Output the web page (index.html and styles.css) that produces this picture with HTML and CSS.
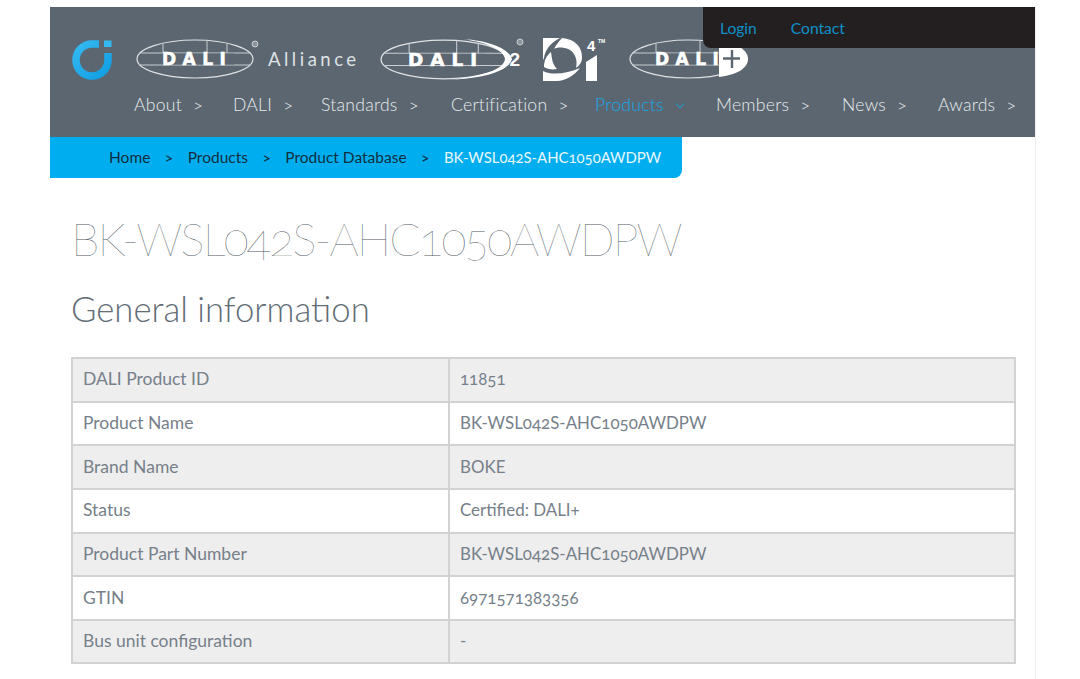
FILE: index.html
```html
<!DOCTYPE html>
<html lang="en">
<head>
    <meta charset="UTF-8">
    <meta name="viewport" content="width=device-width, initial-scale=1.0">
    <title>BK-WSL042S-AHC1050AWDPW</title>
    <link rel="stylesheet" href="styles.css">
</head>
<body>
    <svg class="defs" width="0" height="0">
        <defs>
            <g id="oval-grid">
                <ellipse cx="59" cy="20" rx="58" ry="19" fill="none" stroke="#dfe2e4" stroke-width="1.200"/>
                <path d="M3 14H115M3 26H115M27 4V14M71 2V14M91 4V14" fill="none" stroke="#c9cdd1" stroke-width="1"/>
                <rect x="26" y="14.500" width="72" height="11" fill="#5b6670"/>
            </g>
        </defs>
    </svg>
    <div class="page">
        <header class="site-header">
            <div class="top-links">
                <a href="#">Login</a>
                <a href="#">Contact</a>
            </div>
            <div class="logos">
                <svg class="logo-mark" width="40" height="40" viewBox="0 0 40 40">
                    <defs>
                        <linearGradient id="mark-blue" x1="0" y1="0" x2="1" y2="1">
                            <stop offset="0" stop-color="#35b8f0"/>
                            <stop offset="1" stop-color="#0f9fe4"/>
                        </linearGradient>
                    </defs>
                    <path d="M27 4H20A16 16 0 1 0 36 20V13" fill="none" stroke="url(#mark-blue)" stroke-width="7.500"/>
                    <rect x="32" y="0.500" width="7.500" height="6.500" fill="#35b8f0"/>
                </svg>
                <svg class="logo-dali" width="124" height="40" viewBox="0 0 124 40">
                    <use href="#oval-grid"/>
                    <text class="dali-word" x="26" y="26">DALI</text>
                    <circle cx="119" cy="5" r="3" fill="#8b949b" stroke="#c9cdd1"/>
                </svg>
                <span class="logo-alliance">Alliance</span>
                <svg class="logo-dali2" width="146" height="42" viewBox="0 0 146 42">
                    <g transform="translate(1 1) scale(1.080 1.020)">
                        <use href="#oval-grid"/>
                        <text class="dali-word" x="26" y="26">DALI</text>
                    </g>
                    <path d="M84 1C112 3 130 11 133 21C130 32 110 40 70 42C106 38 125 31 126 21C125 12 110 5 84 1Z" fill="#fff"/>
                    <text class="dali-two" x="130.500" y="28">2</text>
                    <circle cx="141" cy="4" r="3" fill="#8b949b" stroke="#c9cdd1"/>
                </svg>
                <svg class="logo-d4i" width="66" height="44" viewBox="0 0 66 44">
                    <path d="M0 0H17C8 4 2 12 1 20L0 22Z" fill="#fff"/>
                    <path d="M19 0C32 1 39 9 39 19C39 24 37 27 33 30C35 22 32 14 25 11C20 9 14 9 11 11C13 7 16 3 19 0Z" fill="#fff"/>
                    <path d="M8 14C9 20 9 26 14 31C9 32 4 31 1 29C1 22 4 17 8 14Z" fill="#fff"/>
                    <path d="M0 33C10 38 25 35 37 30C32 37 22 43 14 43H0Z" fill="#fff"/>
                    <path d="M43 24L54 17V43H43Z" fill="#fff"/>
                    <text class="d4i-four" x="44" y="13">4</text>
                    <text class="d4i-tm" x="55" y="5">TM</text>
                </svg>
                <svg class="logo-daliplus" width="120" height="40" viewBox="0 0 120 40">
                    <use href="#oval-grid"/>
                    <text class="dali-word" x="26" y="26">DALI</text>
                    <path d="M90 2C108 4 119 11 119 20C119 29 108 36 90 38Z" fill="#fff"/>
                    <path d="M103 11V29M94 19.500H111" fill="none" stroke="#5b6670" stroke-width="2.400"/>
                </svg>
            </div>
            <nav class="main-nav">
                <a class="nav-about" href="#">About <span class="caret">&gt;</span></a>
                <a class="nav-dali" href="#">DALI <span class="caret">&gt;</span></a>
                <a class="nav-standards" href="#">Standards <span class="caret">&gt;</span></a>
                <a class="nav-cert" href="#">Certification <span class="caret">&gt;</span></a>
                <a class="nav-products active" href="#">Products
                    <svg class="chevron" width="10" height="6" viewBox="0 0 10 6"><path d="M1 0.500L5 5L9 0.500" fill="none" stroke="#17a8ea"/></svg>
                </a>
                <a class="nav-members" href="#">Members <span class="caret">&gt;</span></a>
                <a class="nav-news" href="#">News <span class="caret">&gt;</span></a>
                <a class="nav-awards" href="#">Awards <span class="caret">&gt;</span></a>
            </nav>
        </header>

        <div class="breadcrumb">
            <a href="#">Home</a><span class="sep">&gt;</span>
            <a href="#">Products</a><span class="sep">&gt;</span>
            <a href="#">Product Database</a><span class="sep">&gt;</span>
            <span class="current">BK-WSL042S-AHC1050AWDPW</span>
        </div>

        <main class="content">
            <h1>BK-WSL042S-AHC1050AWDPW</h1>
            <h2>General information</h2>
            <table class="info-table">
                <tr><td>DALI Product ID</td><td>11851</td></tr>
                <tr><td>Product Name</td><td>BK-WSL042S-AHC1050AWDPW</td></tr>
                <tr><td>Brand Name</td><td>BOKE</td></tr>
                <tr><td>Status</td><td>Certified: DALI+</td></tr>
                <tr><td>Product Part Number</td><td>BK-WSL042S-AHC1050AWDPW</td></tr>
                <tr><td>GTIN</td><td>6971571383356</td></tr>
                <tr><td>Bus unit configuration</td><td>-</td></tr>
            </table>
        </main>
    </div>
</body>
</html>
```

FILE: styles.css
```css
html, body {
    margin: 0;
    height: 100%;
    overflow: hidden;
}
body {
    font-family: "Lato", "Liberation Sans", sans-serif;
    font-variant-numeric: oldstyle-nums;
    background-color: white;
    color: #6d7780;
}
.defs {
    display: block;
    height: 0;
}
.page {
    margin: 7px 0 0 50px;
    width: 985px;
    min-height: 672px;
    border-right: 1px solid #eceef0;
}
.site-header {
    position: relative;
    height: 130px;
    background-color: #5b6670;
    box-sizing: border-box;
    padding: 31px 0 0 22px;
}
.top-links {
    position: absolute;
    top: 0;
    right: 0;
    left: 653px;
    height: 41px;
    box-sizing: border-box;
    padding: 12px 0 0 17px;
    display: flex;
    gap: 34px;
    background-color: #231f20;
    border-bottom-left-radius: 8px;
    font-size: 15.600px;
}
.top-links a {
    color: #0f8fc8;
    text-decoration: none;
}
.logos svg {
    flex: none;
}
.logos {
    display: flex;
    align-items: flex-start;
    height: 44px;
}
.logo-mark {
    margin-top: 2px;
}
.logo-dali {
    margin: 1px 0 0 24px;
}
.logo-alliance {
    margin: 10px 0 0 8px;
    width: 91px;
    font-size: 18.500px;
    letter-spacing: 3.500px;
    color: #dfe2e4;
    white-space: nowrap;
}
.logo-dali2 {
    margin-left: 20px;
}
.logo-d4i {
    margin-left: 18px;
}
.logo-daliplus {
    margin: 1px 0 0 20px;
}
.dali-word {
    font-family: "DejaVu Sans", sans-serif;
    font-weight: bold;
    font-size: 17px;
    letter-spacing: 6.500px;
    fill: white;
    stroke: white;
    stroke-width: 0.600px;
}
.dali-two {
    font-family: "Liberation Sans", sans-serif;
    font-weight: bold;
    font-size: 19px;
    fill: white;
}
.d4i-four {
    font-family: "Liberation Sans", sans-serif;
    font-weight: bold;
    font-size: 15px;
    fill: white;
}
.d4i-tm {
    font-family: "Liberation Sans", sans-serif;
    font-weight: bold;
    font-size: 5px;
    fill: white;
}
.main-nav {
    display: flex;
    margin: 11px 0 0 62px;
    font-size: 17.600px;
    font-weight: 300;
    line-height: 24px;
    letter-spacing: 0.250px;
}
.main-nav a {
    display: block;
    color: #e8ebed;
    text-decoration: none;
    white-space: nowrap;
}
.main-nav a.active {
    color: #17a8ea;
}
.nav-about { width: 99px; }
.nav-dali { width: 88px; }
.nav-standards { width: 130px; }
.nav-cert { width: 144px; }
.nav-products { width: 121px; }
.nav-members { width: 126px; }
.nav-news { width: 96px; }
.nav-awards { width: 85px; }
.caret {
    margin-left: 6px;
    font-size: 18px;
    line-height: 1;
}
.chevron {
    margin: 0 0 2px 6px;
}
.breadcrumb {
    width: 632px;
    height: 41px;
    box-sizing: border-box;
    padding: 0 0 2px 59px;
    display: flex;
    align-items: center;
    background-color: #00aeef;
    border-bottom-right-radius: 8px;
    font-size: 15.500px;
}
.breadcrumb a {
    color: #10303f;
    text-decoration: none;
}
.breadcrumb .sep {
    margin: 0 14.500px;
    color: #10303f;
}
.breadcrumb .current {
    font-size: 14.900px;
    color: #e8f7fd;
    white-space: nowrap;
}
.content {
    padding: 0 19px 0 21px;
}
h1 {
    margin: 33px 0 0 0;
    font-size: 46px;
    line-height: 56px;
    font-weight: 100;
    letter-spacing: -2px;
    color: #4f5a63;
    white-space: nowrap;
}
h2 {
    margin: 20px 0 0 0;
    font-size: 34.700px;
    line-height: 44px;
    font-weight: 300;
    color: #626d76;
}
.info-table {
    width: 945px;
    margin-top: 26px;
    border-collapse: collapse;
    font-size: 16.900px;
    color: #76808a;
    table-layout: fixed;
}
.info-table td {
    height: 39.650px;
    padding: 0 10px 2px;
    border: 2px solid #d2d2d2;
    box-sizing: content-box;
}
.info-table td:first-child {
    width: 355px;
    font-size: 17.500px;
}
.info-table tr:nth-child(odd) {
    background-color: #eeeeee;
}
```
